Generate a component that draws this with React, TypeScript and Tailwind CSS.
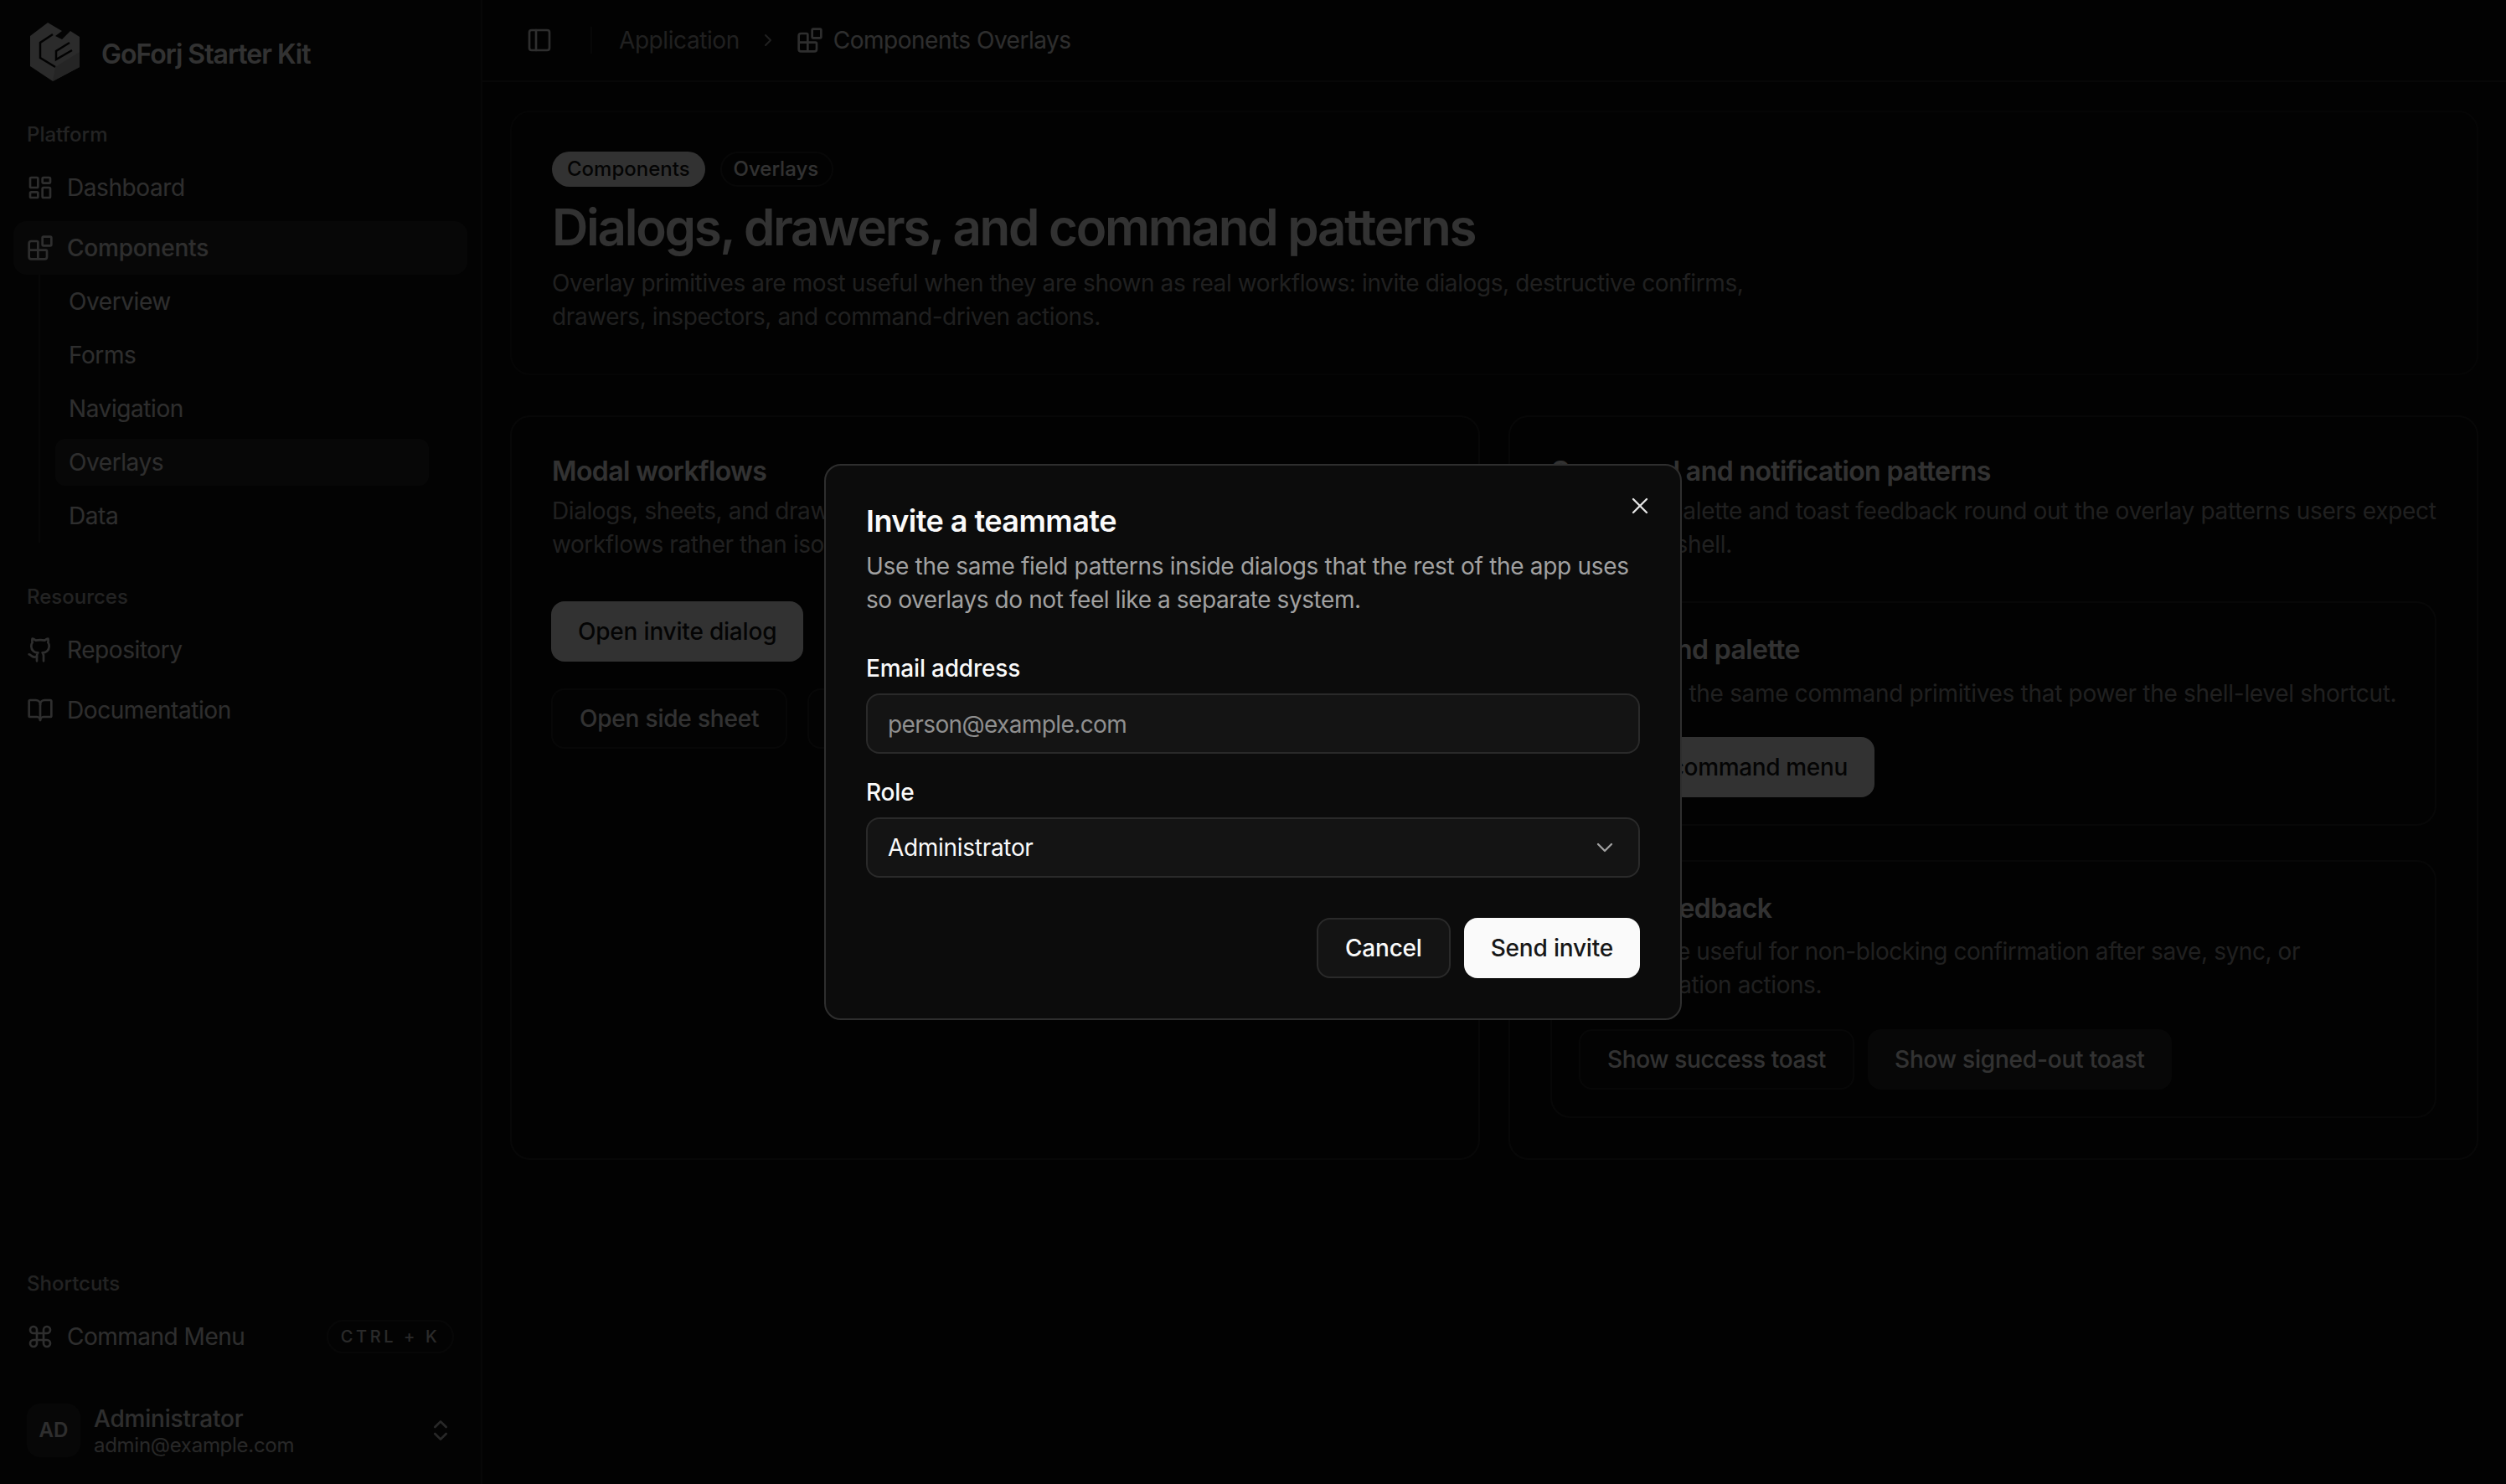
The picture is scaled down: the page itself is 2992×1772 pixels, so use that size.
import {
  BookOpen,
  Blocks,
  ChevronDown,
  ChevronRight,
  ChevronsUpDown,
  Command,
  Github,
  LayoutDashboard,
  PanelLeft,
  X,
} from "lucide-react";

function Logo() {
  return (
    <svg width="84" height="84" viewBox="0 0 84 84" className="shrink-0 -ml-[12px] -mt-[8px]">
      <path d="M12 23 L33 7 L50 17 L42 23 L50 27 L60 17 L71 24 L71 60 L39 77 L12 59 Z" fill="#d4d4d4" />
      <path d="M42 60 L71 42 L71 60 L39 77 Z" fill="#b8b8b8" />
      <path d="M39 21 L24 31 L24 49 L42 60" fill="none" stroke="#0a0a0a" strokeWidth="2.5" />
      <path d="M59 31 L43 41 L43 51 L62 40" fill="none" stroke="#0a0a0a" strokeWidth="2.5" />
    </svg>
  );
}

function NavRow({ icon, label, active }: { icon: React.ReactNode; label: string; active?: boolean }) {
  return (
    <div
      className={`flex items-center gap-4 h-16 px-4 rounded-2xl text-[28px] text-[#e5e5e5] ${
        active ? "bg-[#262626] font-medium tracking-[-0.2px]" : ""
      }`}
    >
      {icon}
      <span>{label}</span>
    </div>
  );
}

function GroupLabel({ children }: { children: React.ReactNode }) {
  return (
    <div className="h-8 px-4 pt-[2px] flex items-center text-2xl font-medium tracking-[0px] text-[#b0b0b0] mb-4">
      {children}
    </div>
  );
}

function Sidebar() {
  const subItems = ["Overview", "Forms", "Navigation", "Overlays", "Data"];
  return (
    <aside className="w-[576px] h-[1772px] shrink-0 flex flex-col border-r-2 border-[#262626] bg-[#101010] px-4">
      {/* Brand */}
      <div className="h-[144px] pt-[28px] pl-5">
        <div className="flex items-start gap-[13px]">
          <Logo />
          <span className="mt-[17px] text-[32px] leading-10 font-semibold tracking-[-1px] text-[#fafafa]">
            GoForj Starter Kit
          </span>
        </div>
      </div>

      <GroupLabel>Platform</GroupLabel>
      <div className="flex flex-col gap-2">
        <NavRow icon={<LayoutDashboard size={32} />} label="Dashboard" />
        <NavRow icon={<Blocks size={32} />} label="Components" active />
      </div>
      <div className="ml-[30px] border-l-2 border-[#262626] pl-[18px] pr-[46px] py-1 flex flex-col gap-2 text-[28px] text-[#e5e5e5]">
        {subItems.map((item) => (
          <div
            key={item}
            className={`h-14 flex items-center px-4 rounded-xl ${item === "Overlays" ? "bg-[#262626]" : ""}`}
          >
            {item}
          </div>
        ))}
      </div>

      <div className="mt-12">
        <GroupLabel>Resources</GroupLabel>
        <div className="flex flex-col gap-2">
          <NavRow icon={<Github size={32} />} label="Repository" />
          <NavRow icon={<BookOpen size={32} />} label="Documentation" />
        </div>
      </div>

      {/* Shortcuts and user */}
      <div className="mt-auto">
        <GroupLabel>Shortcuts</GroupLabel>
        <div className="flex items-center justify-between h-16 px-4 text-[28px] text-[#e5e5e5]">
          <div className="flex items-center gap-4">
            <Command size={32} />
            <span className="tracking-[-0.5px]">Command Menu</span>
          </div>
          <span className="h-10 w-[152px] flex items-center justify-center rounded-full border-2 border-[#262626] text-xl font-medium tracking-[0.18em] text-[#d0d0d0]">
            CTRL + K
          </span>
        </div>
        <div className="flex items-center gap-4 h-24 mt-8 mb-4 px-4 text-[#e5e5e5]">
          <div className="w-16 h-16 shrink-0 flex items-center justify-center rounded-2xl bg-[#262626] text-2xl font-semibold tracking-[0px]">
            AD
          </div>
          <div className="flex-1 flex flex-col pt-1">
            <span className="text-[28px] leading-8 font-medium tracking-[-0.2px]">Administrator</span>
            <span className="text-2xl leading-8 tracking-[-0.28px] text-[#c8c8c8]">admin@example.com</span>
          </div>
          <ChevronsUpDown size={32} className="text-[#c8c8c8]" />
        </div>
      </div>
    </aside>
  );
}

function PageHeader() {
  return (
    <header className="h-[98px] shrink-0 flex items-center border-b-2 border-[#262626] pl-[52px] text-[28px]">
      <PanelLeft size={32} className="text-[#e5e5e5]" />
      <div className="ml-[45px] mr-[32px] w-[2px] h-8 bg-[#262626]" />
      <span className="text-[#a1a1a1]">Application</span>
      <ChevronRight size={24} className="ml-[22px] mr-[22px] text-[#a1a1a1]" />
      <Blocks size={32} className="text-[#e5e5e5] mr-[12px]" />
      <span className="text-[#e5e5e5] tracking-[-0.5px]">Components Overlays</span>
    </header>
  );
}

function Button({
  children,
  variant,
  tight,
}: {
  children: React.ReactNode;
  variant: "primary" | "outline" | "secondary";
  tight?: boolean;
}) {
  const styles = {
    primary: "bg-[#fafafa] text-[#171717]",
    outline: "border-2 border-[#262626] bg-[#0f0f0f] text-[#fafafa]",
    secondary: "bg-[#262626] text-[#fafafa]",
  };
  return (
    <button
      className={`h-[72px] px-8 shrink-0 rounded-2xl text-[28px] font-medium ${
        tight ? "tracking-[-0.35px]" : "tracking-[-0.2px]"
      } ${styles[variant]}`}
    >
      {children}
    </button>
  );
}

function Hero() {
  return (
    <section className="rounded-3xl border-2 border-[#1c1c1c] px-12 pt-[47px] pb-12 bg-[#0a0a0a]">
      <div className="flex gap-[18px] tracking-[0px]">
        <span className="h-[42px] px-[18px] flex items-center rounded-full bg-[#fafafa] text-2xl font-medium text-[#171717]">
          Components
        </span>
        <span className="h-[42px] pl-[14px] pr-[16px] flex items-center rounded-full border-2 border-[#262626] text-2xl font-medium text-[#fafafa]">
          Overlays
        </span>
      </div>
      <h1 className="mt-[18px] text-[60px] leading-[60px] font-semibold tracking-[-2.26px] text-[#fafafa]">
        Dialogs, drawers, and command patterns
      </h1>
      <p className="mt-[17px] max-w-[1480px] text-[28px] leading-10 tracking-[-0.4px] text-[#a1a1a1]">
        Overlay primitives are most useful when they are shown as real workflows: invite dialogs, destructive confirms,
        drawers, inspectors, and command-driven actions.
      </p>
    </section>
  );
}

function ModalCard() {
  return (
    <section className="rounded-3xl border-2 border-[#262626] bg-[#0a0a0a] px-12 pt-[49px] pb-12">
      <h2 className="text-[32px] leading-8 font-semibold tracking-[-0.6px] text-[#fafafa]">Modal workflows</h2>
      <p className="mt-[11px] text-[28px] leading-10 text-[#a1a1a1]">
        Dialogs, sheets, and drawers should be shown in the context of real
        <br />
        workflows rather than isolated component demos.
      </p>
      <div className="mt-12 flex flex-wrap gap-6 -ml-px">
        <Button variant="primary">Open invite dialog</Button>
        <div className="w-full flex gap-6 mt-2">
          <Button variant="outline">Open side sheet</Button>
          <Button variant="outline">Open inspector</Button>
        </div>
      </div>
    </section>
  );
}

function PatternsCard() {
  return (
    <section className="rounded-3xl border-2 border-[#262626] bg-[#0a0a0a] px-12 pt-[49px] pb-12">
      <h2 className="text-[32px] leading-8 font-semibold tracking-[-0.6px] text-[#fafafa]">
        Command and notification patterns
      </h2>
      <p className="mt-[11px] text-[28px] leading-10 tracking-[-0.3px] text-[#a1a1a1]">
        Command palette and toast feedback round out the overlay patterns users expect inside their shell.
      </p>
      <div className="mt-12 rounded-3xl border-2 border-[#262626] p-8">
        <h3 className="text-[32px] leading-12 font-semibold tracking-[-0.6px] text-[#fafafa]">Command palette</h3>
        <p className="mt-2 text-[28px] leading-10 tracking-[-0.3px] text-[#a1a1a1]">
          Exercises the same command primitives that power the shell-level shortcut.
        </p>
        <div className="mt-8">
          <Button variant="primary" tight>
            Open command menu
          </Button>
        </div>
      </div>
      <div className="mt-[41px] rounded-3xl border-2 border-[#262626] p-8">
        <h3 className="text-[32px] leading-12 font-semibold tracking-[-0.6px] text-[#fafafa]">Toast feedback</h3>
        <p className="mt-[7px] text-[28px] leading-10 text-[#a1a1a1]">
          Toasts are useful for non-blocking confirmation after save, sync, or authentication actions.
        </p>
        <div className="mt-[33px] flex gap-4">
          <Button variant="outline" tight>
            Show success toast
          </Button>
          <Button variant="secondary">Show signed-out toast</Button>
        </div>
      </div>
    </section>
  );
}

function InviteDialog() {
  return (
    <div className="relative w-[1024px] rounded-[20px] border-2 border-[#2e2e2e] bg-[#0c0c0c] p-12 text-[#fafafa]">
      <X size={32} strokeWidth={1.75} className="absolute top-[32px] right-[32px] text-[#e5e5e5]" />
      <h2 className="text-4xl leading-9 font-semibold tracking-[-0.55px]">Invite a teammate</h2>
      <p className="mt-4 text-[28px] leading-10 tracking-[-0.3px] text-[#a1a1a1]">
        Use the same field patterns inside dialogs that the rest of the app uses
        <br />
        <span className="tracking-[-0.42px]">so overlays do not feel like a separate system.</span>
      </p>
      <label className="block mt-12 text-[28px] leading-7 font-medium tracking-[-0.2px]">Email address</label>
      <div className="mt-4 h-[72px] px-6 pt-[2px] flex items-center rounded-2xl border-2 border-[#2a2a2a] bg-[#141414] text-[28px] tracking-[-0.6px] text-[#8f8f8f]">
        person@example.com
      </div>
      <label className="block mt-8 text-[28px] leading-7 font-medium tracking-[-0.2px]">Role</label>
      <div className="mt-4 h-[72px] px-6 flex items-center justify-between rounded-2xl border-2 border-[#2a2a2a] bg-[#141414] text-[28px] tracking-[-0.3px]">
        <span>Administrator</span>
        <ChevronDown size={32} strokeWidth={1.75} className="text-[#a1a1a1]" />
      </div>
      <div className="mt-12 flex justify-end gap-4 tracking-[-0.2px]">
        <button className="h-[72px] px-8 rounded-2xl border-2 border-[#2a2a2a] bg-[#141414] text-[28px] font-medium">
          Cancel
        </button>
        <button className="h-[72px] px-8 rounded-2xl bg-[#fafafa] text-[28px] font-medium text-[#171717]">
          Send invite
        </button>
      </div>
    </div>
  );
}

export default function App() {
  return (
    <div className="relative w-[2992px] h-[1772px] overflow-hidden flex bg-[#0a0a0a] font-[Inter,sans-serif] tracking-[-0.42px]">
      <Sidebar />
      <main className="flex-1 flex flex-col">
        <PageHeader />
        <div className="px-[33px] pt-[34px] flex flex-col gap-12">
          <Hero />
          <div className="grid grid-cols-2 gap-[34px]">
            <ModalCard />
            <PatternsCard />
          </div>
        </div>
      </main>
      {/* Backdrop and dialog */}
      <div className="fixed inset-0 flex items-center justify-center bg-black/80">
        <InviteDialog />
      </div>
    </div>
  );
}
